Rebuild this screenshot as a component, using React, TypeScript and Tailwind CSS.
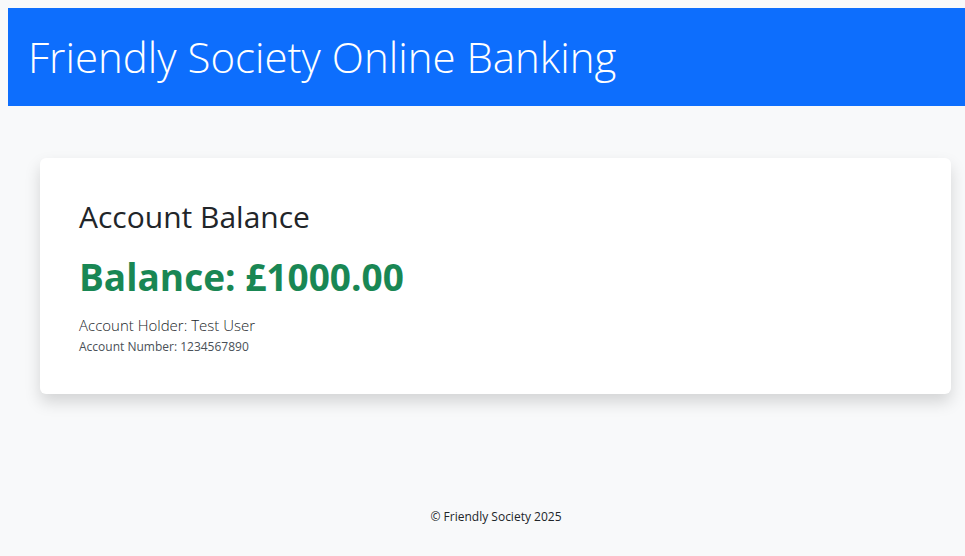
export default function App() {
  return (
    <div
      className="min-h-[556px] bg-[#f8f9fa] pt-2 pl-2"
      style={{ fontFamily: '"Open Sans", "Noto Sans", sans-serif' }}
    >
      <header className="flex h-[98px] w-full items-center bg-[#0d6efd] px-5">
        <h1 className="text-[42px] font-light leading-[50px] text-white">
          Friendly Society Online Banking
        </h1>
      </header>
      <main className="ml-8 mr-[14px] mt-[52px]">
        <div className="flex flex-col rounded-md bg-white pl-[39px] pr-10 pt-[41px] pb-[38px] shadow-[0_8px_16px_rgba(0,0,0,0.15)]">
          <h2 className="text-[30px] font-normal leading-[36px] text-[#212529]">
            Account Balance
          </h2>
          <p className="mt-5 text-[37px] font-bold leading-[44px] text-[#198754]">
            Balance: £1000.00
          </p>
          <p className="mt-[15px] text-[15px] font-light leading-[22px] text-[#212529]">
            Account Holder: Test User
          </p>
          <p className="mt-[2px] text-[12px] leading-[18px] text-[#495057]">
            Account Number: 1234567890
          </p>
        </div>
      </main>
      <footer className="mt-[114px] flex w-full justify-center pl-[19px]">
        <p className="text-[12px] leading-[18px] text-[#212529]">
          © Friendly Society 2025
        </p>
      </footer>
    </div>
  );
}
